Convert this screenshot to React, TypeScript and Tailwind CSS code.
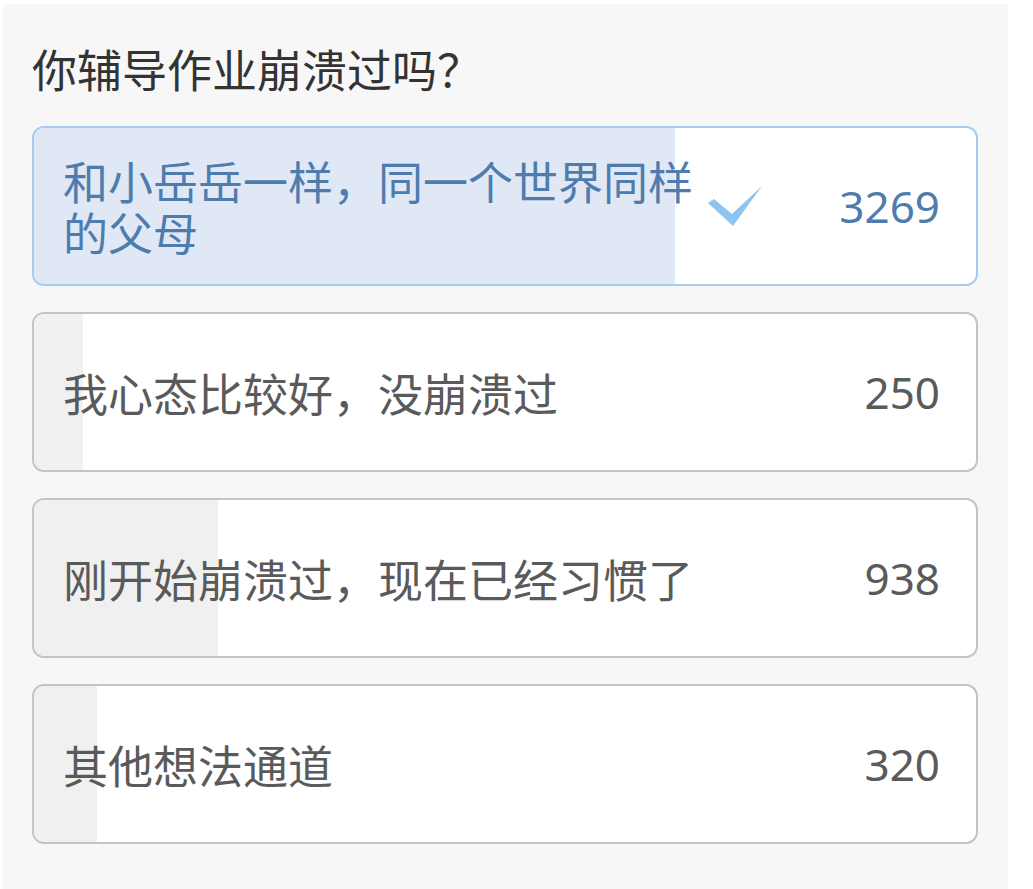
import React from 'react';

type Option = { label: string; count: number; selected?: boolean };

const options: Option[] = [
  { label: '和小岳岳一样，同一个世界同样的父母', count: 3269, selected: true },
  { label: '我心态比较好，没崩溃过', count: 250 },
  { label: '刚开始崩溃过，现在已经习惯了', count: 938 },
  { label: '其他想法通道', count: 320 },
];

const total = options.reduce((s, o) => s + o.count, 0);

function Check() {
  return (
    <svg width="58" height="46" viewBox="0 0 58 46" className="shrink-0">
      <path d="M2 19 L8 15 L26 30 L56 2 L27 42 Z" fill="#8ec4f2" />
    </svg>
  );
}

function PollOption({ option }: { option: Option }) {
  const pct = (option.count / total) * 99.4;
  const sel = option.selected;
  return (
    <div
      className={`relative h-[160px] rounded-[12px] border-2 overflow-hidden bg-white ${
        sel ? 'border-[#a6cbee]' : 'border-[#c4c4c4]'
      }`}
    >
      {/* progress fill */}
      <div
        className={`absolute inset-y-0 left-0 ${sel ? 'bg-[#dfe8f4]' : 'bg-[#f0f0f0]'}`}
        style={{ width: `${pct}%` }}
      />
      <div className="relative flex h-full items-center pl-[29px] pr-[36px]">
        <div
          className={`w-[636px] text-[45px] leading-[51px] ${sel ? 'text-[#4e7cae]' : 'text-[#5a5a5a]'}`}
        >
          {option.label}
        </div>
        {sel && (
          <div className="ml-[7px] mt-[2px]">
            <Check />
          </div>
        )}
        <div
          className={`ml-auto text-[44px] ${sel ? 'text-[#4e7cae]' : 'text-[#5a5a5a]'}`}
          style={{ fontFamily: '"Noto Sans", "Noto Sans CJK SC", sans-serif' }}
        >
          {option.count}
        </div>
      </div>
    </div>
  );
}

export default function App() {
  return (
    <div
      className="min-h-[889px] bg-white pt-[4px] pl-[3px]"
      style={{ fontFamily: '"Noto Sans CJK SC", "Noto Sans", sans-serif' }}
    >
      <div className="w-[1005px] min-h-[885px] bg-[#f7f7f7] pl-[29px] pt-[39px]">
        <h1 className="text-[45px] leading-[52px] text-[#333333] font-normal">你辅导作业崩溃过吗？</h1>
        <div className="mt-[31px] flex w-[946px] flex-col gap-[26px]">
          {options.map((o) => (
            <PollOption key={o.label} option={o} />
          ))}
        </div>
      </div>
    </div>
  );
}
